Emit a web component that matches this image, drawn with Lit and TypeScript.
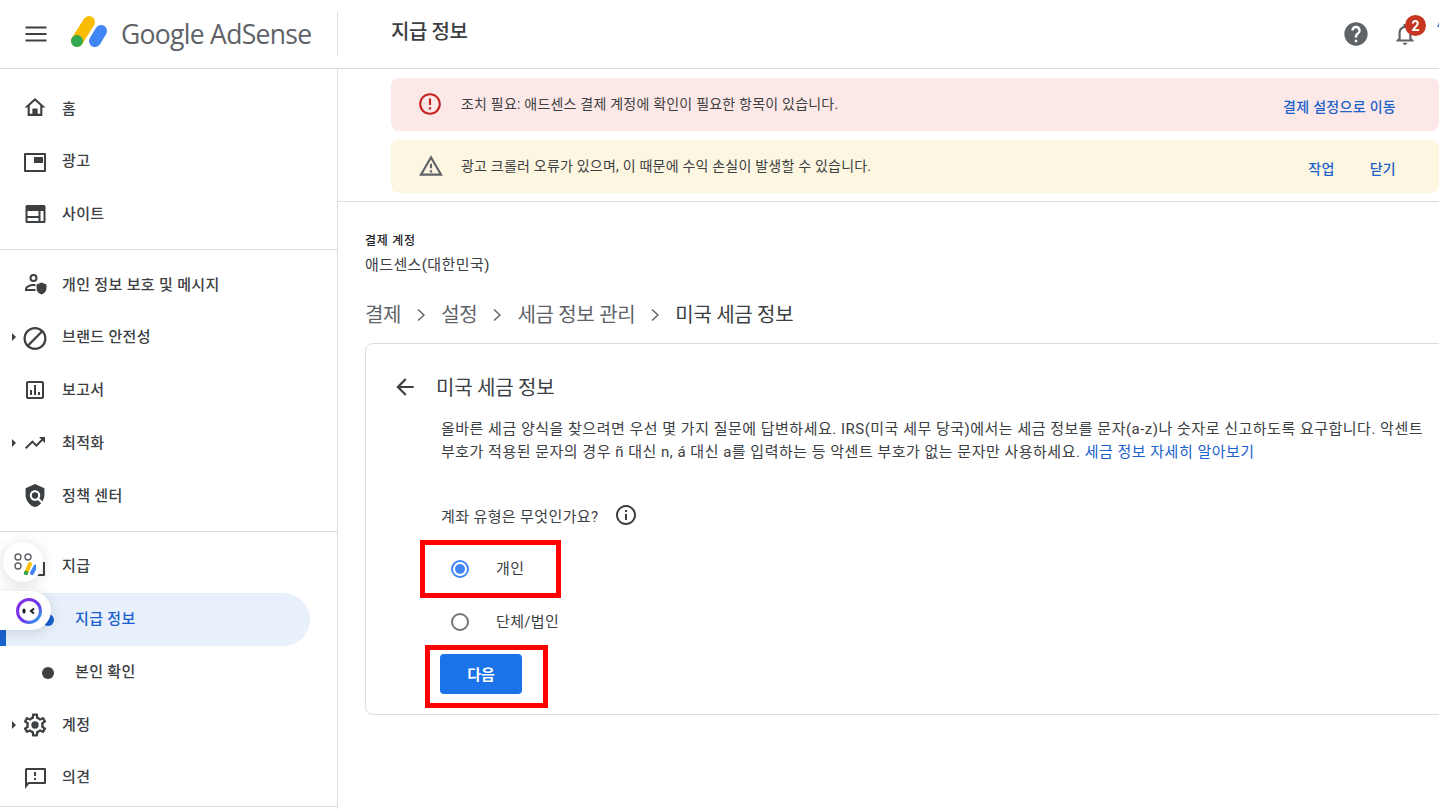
import { LitElement, html, css, svg } from "lit";
import { customElement } from "lit/decorators.js";

const ICONS: Record<string, unknown> = {
  home: svg`<g transform="translate(12 11.500) scale(1.050) translate(-12 -12)"><path d="M12 5.69l5 4.5V18H7v-7.81l5-4.5M12 3L2 12h3v8h14v-8h3L12 3z"/><rect x="9.5" y="13" width="5" height="5.5"/></g>`,
  ads: svg`<path fill-rule="evenodd" d="M2 4h20a1 1 0 011 1v17a1 1 0 01-1 1H2a1 1 0 01-1-1V5a1 1 0 011-1zm1 2v15h18V6z"/><rect x="11" y="8" width="9" height="6"/>`,
  site: svg`<path fill-rule="evenodd" d="M4 4h17a1.5 1.5 0 011.5 1.5v15A1.5 1.5 0 0121 22H4a1.500 1.500 0 01-1.500-1.500v-15A1.500 1.500 0 014 4zm.500 6v5h11v-5zm13 0v10h3V10zm-13 7v3h11v-3z"/>`,
  privacy: svg`<path fill-rule="evenodd" d="M10.500 2a4 4 0 110 8 4 4 0 010-8zm0 2a2 2 0 100 4 2 2 0 000-4zM2 19v-2c0-3 5-5 8.500-5 .7 0 1.300.1 2 .2v2c-.7-.1-1.300-.2-2-.2-3 0-6.500 1.600-6.500 3h8.500v2z"/><path d="M18.500 10.500l5 2v3.500c0 3-2.200 5.700-5 6.500-2.800-.8-5-3.500-5-6.500v-3.500z"/>`,
  block: svg`<g transform="translate(12 13.500) scale(1.150) translate(-12 -12)"><path d="M12 2C6.480 2 2 6.480 2 12s4.480 10 10 10 10-4.480 10-10S17.520 2 12 2zM4 12c0-4.420 3.580-8 8-8 1.850 0 3.550.63 4.900 1.690L5.690 16.900C4.630 15.550 4 13.850 4 12zm8 8c-1.850 0-3.550-.63-4.900-1.690L18.310 7.100C19.370 8.450 20 10.150 20 12c0 4.420-3.580 8-8 8z"/></g>`,
  report: svg`<path d="M19 3H5c-1.100 0-2 .9-2 2v14c0 1.100.9 2 2 2h14c1.100 0 2-.9 2-2V5c0-1.100-.9-2-2-2zm0 16H5V5h14v14z"/><path d="M7 12h2v5H7zm4-5h2v10h-2zm4 7h2v3h-2z"/>`,
  trend: svg`<path d="M16 6l2.290 2.290-4.880 4.880-4-4L2 16.590 3.410 18l6-6 4 4 6.300-6.290L22 12V6z"/>`,
  policy: svg`<g transform="translate(12 12.500) scale(1.050) translate(-12 -12)"><path d="M21 5l-9-4-9 4v6c0 5.550 3.840 10.740 9 12 2.300-.56 4.330-1.900 5.880-3.710l-3.120-3.120c-1.940 1.290-4.580 1.070-6.290-.64-1.950-1.950-1.950-5.120 0-7.070 1.950-1.950 5.120-1.950 7.070 0 1.710 1.710 1.920 4.350.64 6.290l2.900 2.900C20.290 15.690 21 13.380 21 11V5z"/><circle cx="12" cy="12" r="3"/></g>`,
  wallet: svg`<path d="M21 7H5V5h13V3H5a2 2 0 00-2 2v14a2 2 0 002 2h16a1 1 0 001-1V8a1 1 0 00-1-1zm-1 12H5V9h15z"/>`,
  gear: svg`<g transform="translate(12 12) scale(1.150) translate(-12 -12)"><path d="M19.430 12.980c.04-.32.07-.64.07-.98 0-.34-.03-.66-.07-.98l2.110-1.650c.19-.15.24-.42.12-.64l-2-3.460c-.09-.16-.26-.25-.44-.25-.06 0-.12.01-.17.03l-2.490 1c-.52-.4-1.080-.73-1.690-.98l-.38-2.650C14.460 2.180 14.250 2 14 2h-4c-.25 0-.46.18-.49.42l-.38 2.650c-.61.25-1.170.59-1.690.98l-2.490-1c-.06-.02-.12-.03-.18-.03-.17 0-.34.09-.43.25l-2 3.460c-.13.22-.07.49.12.64l2.110 1.650c-.04.32-.07.65-.07.98 0 .33.03.66.07.98l-2.110 1.650c-.19.15-.24.42-.12.64l2 3.460c.09.16.26.25.44.25.06 0 .12-.01.17-.03l2.490-1c.52.4 1.080.73 1.690.98l.38 2.650c.03.24.24.42.49.42h4c.25 0 .46-.18.49-.42l.38-2.650c.61-.25 1.170-.59 1.690-.98l2.490 1c.06.02.12.03.18.03.17 0 .34-.09.43-.25l2-3.460c.12-.22.07-.49-.12-.64l-2.110-1.650zm-1.980-1.710c.04.31.05.52.05.73 0 .21-.02.43-.05.73l-.14 1.130.89.7 1.080.84-.7 1.210-1.270-.51-1.040-.42-.9.68c-.43.32-.84.56-1.250.73l-1.060.43-.16 1.130-.2 1.350h-1.400l-.19-1.350-.16-1.130-1.060-.43c-.43-.18-.83-.41-1.230-.71l-.91-.7-1.060.43-1.270.51-.7-1.210 1.080-.84.89-.7-.14-1.130c-.03-.31-.05-.54-.05-.74s.02-.43.05-.73l.14-1.130-.89-.7-1.080-.84.7-1.210 1.270.51 1.040.42.9-.68c.43-.32.84-.56 1.250-.73l1.060-.43.16-1.130.2-1.350h1.390l.19 1.350.16 1.130 1.060.43c.43.18.83.41 1.230.71l.91.7 1.060-.43 1.270-.51.7 1.210-1.070.85-.89.7.14 1.130z"/><circle cx="12" cy="12" r="3.200"/></g>`,
  feedback: svg`<path d="M22 2H3.500C2.400 2 2 2.900 2 4v19l4-5h16c1.100 0 1-.9 1-2V4c0-1.100.1-2-1-2zm-1 14H5.170L4 17.170V4h17v12z"/><path d="M11 12h2v2h-2zm0-6h2v4h-2z"/>`,
};

type NavItem = { label: string; icon?: string; caret?: boolean; sub?: boolean; active?: boolean };

const GROUPS: NavItem[][] = [
  [
    { label: "홈", icon: "home" },
    { label: "광고", icon: "ads" },
    { label: "사이트", icon: "site" },
  ],
  [
    { label: "개인 정보 보호 및 메시지", icon: "privacy" },
    { label: "브랜드 안전성", icon: "block", caret: true },
    { label: "보고서", icon: "report" },
    { label: "최적화", icon: "trend", caret: true },
    { label: "정책 센터", icon: "policy" },
  ],
  [
    { label: "지급", icon: "wallet" },
    { label: "지급 정보", sub: true, active: true },
    { label: "본인 확인", sub: true },
    { label: "계정", icon: "gear", caret: true },
    { label: "의견", icon: "feedback" },
  ],
];

@customElement("app-root")
export class AppRoot extends LitElement {
  static styles = css`
    :host {
      display: block;
      position: relative;
      width: 1439px;
      height: 809px;
      overflow: hidden;
      background: #fff;
      color: #3c4043;
      font-family: Roboto, "Noto Sans CJK KR", sans-serif;
      font-size: 15px;
      letter-spacing: 0.33px;
    }
    svg { display: block; fill: currentColor; }
    svg.raw { fill: none; }
    .header {
      height: 68px;
      display: flex;
      align-items: center;
      border-bottom: 1px solid #dadce0;
    }
    .brand {
      width: 337px;
      height: 44px;
      display: flex;
      align-items: center;
      border-right: 1px solid #dadce0;
      flex: none;
    }
    .burger { margin-left: 24px; color: #3c4043; flex: none; }
    .logo { margin: -5px 0 0 23px; flex: none; overflow: visible; }
    .wordmark {
      margin-left: 14px;
      font-family: "Open Sans", sans-serif;
      font-size: 26.500px;
      letter-spacing: -0.7px;
      color: #5f6368;
      white-space: nowrap;
    }
    .title {
      margin: -7px 0 0 53px;
      font-size: 20px;
      font-weight: 500;
      color: #3c4043;
      letter-spacing: -0.4px;
      flex: 1;
    }
    .tools { position: relative; display: flex; align-items: center; width: 97px; height: 68px; flex: none; }
    .help { color: #5f6368; }
    .bell { margin-left: 22px; color: #5f6368; }
    .badge {
      position: absolute;
      left: 63px;
      top: 15px;
      width: 21px;
      height: 21px;
      border-radius: 50%;
      background: #c5351f;
      color: #fff;
      font-size: 14px;
      font-weight: 700;
      letter-spacing: 0;
      display: flex;
      align-items: center;
      justify-content: center;
    }
    .avatar-edge {
      position: absolute;
      left: 95px;
      top: 22px;
      width: 0;
      height: 0;
      border-left: 2px solid transparent;
      border-right: 2px solid transparent;
      border-bottom: 5px solid #4285f4;
    }
    .body { display: flex; height: 740px; }
    .side {
      width: 337px;
      flex: none;
      border-right: 1px solid #dadce0;
    }
    .group { border-bottom: 1px solid #dadce0; }
    .group:nth-child(1) { padding: 13px 0 9.500px; }
    .group:nth-child(1) .item { height: 52.500px; }
    .group:nth-child(2) { padding: 8px 0 9.500px; }
    .group:nth-child(3) { padding: 8px 0 2px; }
    .item {
      position: relative;
      height: 52.750px;
      display: flex;
      align-items: center;
      color: #3c4043;
      font-weight: 500;
      width: 310px;
      white-space: nowrap;
    }
    .item .ico { margin-left: 23px; width: 24px; height: 24px; flex: none; overflow: visible; }
    .item .lbl { margin-left: 15px; margin-top: -2px; }
    .item.sub .lbl { margin-left: 75px; }
    .group:nth-child(2) .item:nth-child(2) .lbl { margin-top: -4px; }
    .group:nth-child(3) .item .lbl { margin-top: -4px; }
    .group:nth-child(3) .item:nth-child(4) .lbl { margin-top: -2px; }
    .item.active {
      background: #e8f0fc;
      border-radius: 0 27px 27px 0;
      color: #1a5fce;
    }
    .item.active::before {
      content: "";
      position: absolute;
      left: 0;
      top: 0;
      bottom: 0;
      width: 6px;
      background: #1a62cc;
    }
    .caret {
      position: absolute;
      left: 12px;
      top: 50%;
      margin-top: -4px;
      border-left: 4px solid #3c4043;
      border-top: 4px solid transparent;
      border-bottom: 4px solid transparent;
    }
    .dot {
      position: absolute;
      left: 42px;
      top: 50%;
      margin-top: -5px;
      width: 12px;
      height: 12px;
      border-radius: 50%;
      background: currentColor;
    }
    .float-a, .float-b {
      position: absolute;
      background: #fff;
      box-shadow: 0 2px 14px rgba(0, 0, 0, 0.14);
      display: flex;
      align-items: center;
      justify-content: center;
    }
    .float-a { left: 3px; top: 542px; width: 40px; height: 40px; border-radius: 50%; }
    .float-b { left: 0; top: 591px; width: 51px; height: 39px; border-radius: 0 20px 20px 0; padding-left: 6px; box-sizing: border-box; }
    .main { flex: 1; min-width: 0; }
    .banners {
      padding: 9px 0 8px 53px;
      display: flex;
      flex-direction: column;
      gap: 9px;
      border-bottom: 1px solid #dadce0;
    }
    .banner {
      height: 53px;
      border-radius: 8px;
      display: flex;
      align-items: center;
      font-size: 14px;
      letter-spacing: 0.21px;
    }
    .banner.err { background: #fce8e6; }
    .banner.warn { background: #fdf6e0; }
    .banner .bi { margin: -2px 0 0 26px; flex: none; }
    .banner .bi.err { color: #c5221f; }
    .banner .bi.warn { color: #5f6368; margin-left: 27px; }
    .banner .msg { margin: -4px 0 0 18px; flex: 1; white-space: nowrap; }
    .banner .bi.warn + .msg { margin-left: 17px; }
    .banner a {
      color: #1a62cc;
      font-size: 14px;
      font-weight: 500;
      letter-spacing: 0.3px;
      margin: 2px 43px 0 0;
      text-decoration: none;
      white-space: nowrap;
    }
    .banner a + a { margin-left: -8px; }
    .content { padding: 31px 0 0 27px; }
    .acct-label { font-size: 12px; font-weight: 500; color: #202124; letter-spacing: 0.7px; line-height: 16px; }
    .acct { margin-top: 6px; line-height: 20px; letter-spacing: 0.4px; }
    .crumbs {
      margin-top: 26px;
      display: flex;
      align-items: center;
      font-size: 20px;
      letter-spacing: -0.3px;
      line-height: 28px;
      color: #5f6368;
      white-space: nowrap;
    }
    .crumbs svg { margin: 0 14px; color: #5f6368; }
    .crumbs .now { color: #3c4043; }
    .card {
      position: relative;
      margin-top: 14px;
      width: 1200px;
      height: 372px;
      box-sizing: border-box;
      border: 1px solid #dadce0;
      border-radius: 8px;
      padding: 26px 0 0 26px;
    }
    .card-head { display: flex; align-items: center; height: 32px; color: #3c4043; }
    .card-head svg { margin-top: 2px; }
    .card-head span { margin-left: 18px; font-size: 20px; letter-spacing: -0.25px; }
    .para {
      margin: 16px 0 0 49px;
      line-height: 23px;
      letter-spacing: 0.5px;
      white-space: nowrap;
      color: #3c4043;
    }
    .para a { color: #1a62cc; text-decoration: none; }
    .q { margin: 39px 0 0 49px; display: flex; align-items: center; height: 24px; gap: 16px; letter-spacing: 0.38px; }
    .opts { margin-top: 15px; margin-left: -1px; }
    .opt { display: flex; align-items: center; height: 53px; margin-left: 60px; }
    .radio {
      width: 18px;
      height: 18px;
      box-sizing: border-box;
      border: 2px solid #757575;
      border-radius: 50%;
      flex: none;
      display: flex;
      align-items: center;
      justify-content: center;
    }
    .radio.on { border-color: #4285f4; }
    .radio.on::after { content: ""; width: 10px; height: 10px; border-radius: 50%; background: #4285f4; }
    .opt span { margin-left: 27px; margin-top: -3px; }
    .next {
      display: flex;
      align-items: center;
      justify-content: center;
      margin: 6px 0 0 48px;
      width: 82px;
      height: 40px;
      border-radius: 4px;
      background: #1a73e8;
      color: #fff;
      font-weight: 700;
      font-size: 15px;
      letter-spacing: 0;
      border: 0;
      padding: 0 0 2px;
      font-family: inherit;
    }
    .mark { position: absolute; border: 5px solid #f00; box-sizing: border-box; }
    .mark.a { left: 54px; top: 196px; width: 141px; height: 58px; }
    .mark.b { left: 59px; top: 301px; width: 123px; height: 63px; }
  `;

  private navItem(it: NavItem) {
    const cls = `item${it.sub ? " sub" : ""}${it.active ? " active" : ""}`;
    return html`<div class=${cls}>
      ${it.caret ? html`<i class="caret"></i>` : ""}
      ${it.sub ? html`<i class="dot"></i>` : ""}
      ${it.icon ? html`<svg class="ico" viewBox="0 0 24 24">${ICONS[it.icon]}</svg>` : ""}
      <span class="lbl">${it.label}</span>
    </div>`;
  }

  render() {
    const chev = html`<svg class="raw" width="12" height="12" viewBox="0 0 12 12" stroke="currentColor" stroke-width="1.400"><path d="M3 0.500 9 6 3 11.500"/></svg>`;
    return html`
      <div class="header">
        <div class="brand">
          <svg class="burger" width="24" height="24" viewBox="0 0 24 24"><path d="M1.500 4.500h21v2h-21zm0 6.500h21v2h-21zm0 6.500h21v2h-21z"/></svg>
          <svg class="logo raw" width="36" height="31" viewBox="0 0 36 31">
            <path d="M6 25 18 6" stroke="#fbbc04" stroke-width="12" stroke-linecap="round"/>
            <path d="M24 25 30 15" stroke="#4285f4" stroke-width="12" stroke-linecap="round"/>
            <circle cx="6" cy="25" r="6" fill="#34a853"/>
          </svg>
          <span class="wordmark">Google AdSense</span>
        </div>
        <div class="title">지급 정보</div>
        <div class="tools">
          <svg class="help" width="28" height="28" viewBox="0 0 24 24"><path d="M12 2C6.480 2 2 6.480 2 12s4.480 10 10 10 10-4.480 10-10S17.520 2 12 2zm1 17h-2v-2h2v2zm2.070-7.750l-.9.920C13.450 12.900 13 13.500 13 15h-2v-.5c0-1.100.45-2.100 1.170-2.830l1.240-1.260c.37-.36.59-.86.59-1.410 0-1.100-.9-2-2-2s-2 .9-2 2H8c0-2.210 1.790-4 4-4s4 1.790 4 4c0 .88-.36 1.680-.93 2.250z"/></svg>
          <svg class="bell" width="26" height="26" viewBox="0 0 24 24"><path d="M12 22c1.100 0 2-.9 2-2h-4c0 1.100.9 2 2 2zm6-6v-5c0-3.070-1.630-5.640-4.500-6.320V4c0-.83-.67-1.500-1.500-1.500s-1.500.67-1.500 1.500v.68C7.640 5.360 6 7.920 6 11v5l-2 2v1h16v-1l-2-2zm-2 1H8v-6c0-2.480 1.510-4.500 4-4.500s4 2.020 4 4.500v6z"/></svg>
          <div class="badge">2</div>
          <i class="avatar-edge"></i>
        </div>
      </div>
      <div class="body">
        <div class="side">
          ${GROUPS.map((g) => html`<div class="group">${g.map((it) => this.navItem(it))}</div>`)}
        </div>
        <div class="main">
          <div class="banners">
            <div class="banner err">
              <svg class="bi err" width="26" height="26" viewBox="0 0 24 24"><path d="M11 15h2v2h-2zm0-8h2v6h-2zm1-5C6.470 2 2 6.480 2 12s4.470 10 10 10 10-4.480 10-10S17.520 2 12 2zm0 18c-4.420 0-8-3.580-8-8s3.580-8 8-8 8 3.580 8 8-3.580 8-8 8z"/></svg>
              <span class="msg">조치 필요: 애드센스 결제 계정에 확인이 필요한 항목이 있습니다.</span>
              <a>결제 설정으로 이동</a>
            </div>
            <div class="banner warn">
              <svg class="bi warn" width="26" height="26" viewBox="0 0 24 24"><path d="M12 5.990L19.530 19H4.470L12 5.990M12 2L1 21h22L12 2zm1 14h-2v2h2v-2zm0-6h-2v4h2v-4z"/></svg>
              <span class="msg">광고 크롤러 오류가 있으며, 이 때문에 수익 손실이 발생할 수 있습니다.</span>
              <a>작업</a>
              <a>닫기</a>
            </div>
          </div>
          <div class="content">
            <div class="acct-label">결제 계정</div>
            <div class="acct">애드센스(대한민국)</div>
            <div class="crumbs">
              <span>결제</span>${chev}<span>설정</span>${chev}<span>세금 정보 관리</span>${chev}<span class="now">미국 세금 정보</span>
            </div>
            <div class="card">
              <div class="card-head">
                <svg width="26" height="26" viewBox="0 0 24 24"><path d="M20 11H7.830l5.590-5.590L12 4l-8 8 8 8 1.410-1.410L7.830 13H20v-2z"/></svg>
                <span>미국 세금 정보</span>
              </div>
              <div class="para">올바른 세금 양식을 찾으려면 우선 몇 가지 질문에 답변하세요. IRS(미국 세무 당국)에서는 세금 정보를 문자(a-z)나 숫자로 신고하도록 요구합니다. 악센트<br />부호가 적용된 문자의 경우 ñ 대신 n, á 대신 a를 입력하는 등 악센트 부호가 없는 문자만 사용하세요. <a>세금 정보 자세히 알아보기</a></div>
              <div class="q">
                <span>계좌 유형은 무엇인가요?</span>
                <svg width="24" height="24" viewBox="0 0 24 24"><path d="M11 7h2v2h-2zm0 4h2v6h-2zm1-9C6.480 2 2 6.480 2 12s4.480 10 10 10 10-4.480 10-10S17.520 2 12 2zm0 18c-4.410 0-8-3.590-8-8s3.590-8 8-8 8 3.590 8 8-3.590 8-8 8z"/></svg>
              </div>
              <div class="opts">
                <div class="opt"><i class="radio on"></i><span>개인</span></div>
                <div class="opt"><i class="radio"></i><span>단체/법인</span></div>
              </div>
              <button class="next">다음</button>
              <div class="mark a"></div>
              <div class="mark b"></div>
            </div>
          </div>
        </div>
      </div>
      <div class="float-a">
        <svg class="raw" width="26" height="26" viewBox="0 0 26 26">
          <circle cx="8" cy="8" r="3" stroke="#5f6368" stroke-width="1.400"/>
          <circle cx="18" cy="8" r="3" stroke="#5f6368" stroke-width="1.400"/>
          <circle cx="8" cy="17" r="3" stroke="#5f6368" stroke-width="1.400"/>
          <path d="M16 24 20 15" stroke="#fbbc04" stroke-width="4" stroke-linecap="round"/>
          <path d="M22 24 25.500 17.500" stroke="#4285f4" stroke-width="4" stroke-linecap="round"/>
          <circle cx="16" cy="24" r="2.200" fill="#34a853"/>
        </svg>
      </div>
      <div class="float-b">
        <svg class="raw" width="28" height="28" viewBox="0 0 28 28">
          <defs><linearGradient id="rg" x1="0" y1="0" x2="1" y2="1"><stop offset="0" stop-color="#8a2be2"/><stop offset="0.6" stop-color="#6a3de8"/><stop offset="1" stop-color="#22b8e8"/></linearGradient></defs>
          <circle cx="14" cy="14" r="11.500" stroke="url(#rg)" stroke-width="3"/>
          <rect x="7.500" y="11.500" width="3" height="5" rx="1.500" fill="#202124"/>
          <path d="M19 11.500 16 14l3 2.500" stroke="#202124" stroke-width="2"/>
        </svg>
      </div>
    `;
  }
}
